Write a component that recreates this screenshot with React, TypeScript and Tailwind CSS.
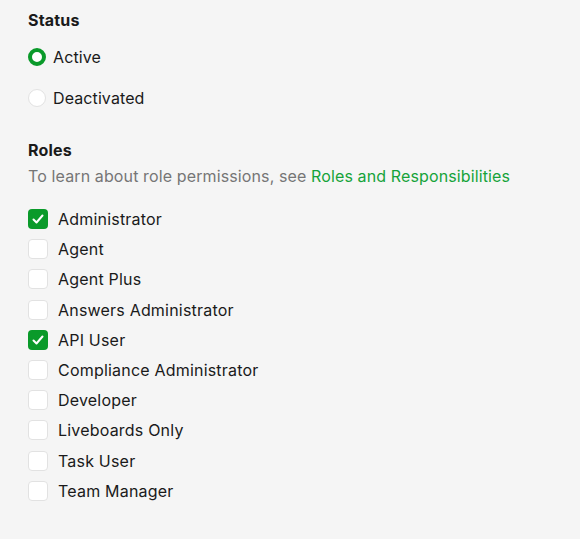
import { useState } from 'react';

const roles = [
  { name: 'Administrator', checked: true },
  { name: 'Agent', checked: false },
  { name: 'Agent Plus', checked: false },
  { name: 'Answers Administrator', checked: false },
  { name: 'API User', checked: true },
  { name: 'Compliance Administrator', checked: false },
  { name: 'Developer', checked: false },
  { name: 'Liveboards Only', checked: false },
  { name: 'Task User', checked: false },
  { name: 'Team Manager', checked: false },
];

export default function App() {
  const [status, setStatus] = useState('active');
  const [selected, setSelected] = useState(roles.map((r) => r.checked));

  return (
    <main className="min-h-[539px] bg-[#f5f5f5] pl-7 pt-[10px] font-['Inter',sans-serif] text-[#1a1a1a]">
      {/* Status */}
      <h2 className="text-[16px] font-bold leading-5 tracking-[0.2px]">Status</h2>
      <div className="mt-[17px] flex flex-col gap-[21px]">
        <Radio label="Active" checked={status === 'active'} onClick={() => setStatus('active')} />
        <Radio label="Deactivated" checked={status === 'deactivated'} onClick={() => setStatus('deactivated')} />
      </div>

      {/* Roles */}
      <h2 className="mt-[32px] text-[16px] font-bold leading-5 tracking-[0.2px]">Roles</h2>
      <p className="mt-[6px] text-[16px] leading-5 tracking-[0.12px] text-[#767676]">
        To learn about role permissions, see{' '}
        <a href="#" className="text-[#16a33a]">Roles and Responsibilities</a>
      </p>

      <div className="mt-[23px] flex flex-col gap-[10.2px]">
        {roles.map((role, i) => (
          <Checkbox
            key={role.name}
            label={role.name}
            checked={selected[i]}
            onClick={() => setSelected((s) => s.map((v, j) => (j === i ? !v : v)))}
          />
        ))}
      </div>
    </main>
  );
}

function Radio({ label, checked, onClick }: { label: string; checked: boolean; onClick: () => void }) {
  return (
    <button onClick={onClick} className="flex h-5 items-center gap-[7px] text-left">
      <span
        className={
          checked
            ? 'h-[18px] w-[18px] rounded-full border-[4px] border-[#0a9a2a] bg-white'
            : 'h-[18px] w-[18px] rounded-full border border-[#e2e2e2] bg-white'
        }
      />
      <span className="text-[16px] leading-5 tracking-[0.1px]">{label}</span>
    </button>
  );
}

function Checkbox({ label, checked, onClick }: { label: string; checked: boolean; onClick: () => void }) {
  return (
    <button onClick={onClick} className="flex h-5 items-center gap-[10px] text-left">
      {checked ? (
        <span className="flex h-5 w-5 items-center justify-center rounded-[4px] bg-[#0a9a2a]">
          <svg width="14" height="14" viewBox="0 0 14 14" fill="none">
            <path d="M2.5 7.5l3 3 6-7" stroke="white" strokeWidth="2" strokeLinecap="round" strokeLinejoin="round" />
          </svg>
        </span>
      ) : (
        <span className="h-5 w-5 rounded-[4px] border border-[#e2e2e2] bg-white" />
      )}
      <span className="text-[16px] leading-5 tracking-[0.2px]">{label}</span>
    </button>
  );
}
